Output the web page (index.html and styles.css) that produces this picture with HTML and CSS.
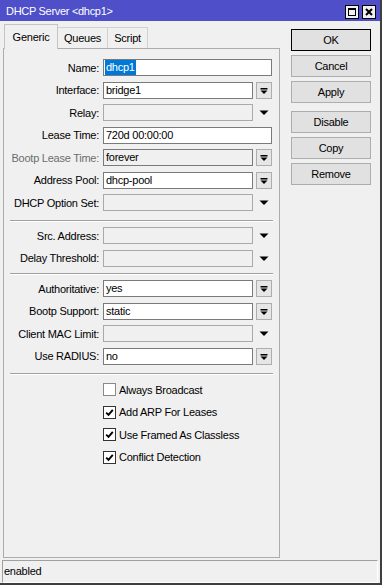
FILE: index.html
```html
<!DOCTYPE html>
<html lang="en">
<head>
    <meta charset="UTF-8">
    <meta name="viewport" content="width=device-width, initial-scale=1.0">
    <title>DHCP Server &lt;dhcp1&gt;</title>
    <link rel="stylesheet" href="styles.css">
</head>
<body>
    <div class="window">
        <div class="titlebar">
            <span class="title">DHCP Server &lt;dhcp1&gt;</span>
            <div class="title-buttons">
                <span class="tbtn">
                    <svg width="12" height="12" viewBox="0 0 12 12"><rect x="2.5" y="2.5" width="7" height="7" fill="none" stroke="#000"/><rect x="2" y="2" width="8" height="2" fill="#000"/></svg>
                </span>
                <span class="tbtn">
                    <svg width="12" height="12" viewBox="0 0 12 12"><path d="M3 3 L9 9 M9 3 L3 9" stroke="#000" stroke-width="2"/></svg>
                </span>
            </div>
        </div>

        <div class="main">
            <div class="left">
                <div class="tabs">
                    <div class="tab tab-generic active">Generic</div>
                    <div class="tab tab-queues">Queues</div>
                    <div class="tab tab-script">Script</div>
                </div>

                <div class="panel">
                    <div class="group">
                        <div class="row">
                            <label>Name:</label>
                            <div class="field wide"><span class="sel">dhcp1</span></div>
                        </div>
                        <div class="row">
                            <label>Interface:</label>
                            <div class="field">bridge1</div>
                            <span class="combo"><svg width="14" height="15" viewBox="0 0 14 15"><rect x="3.5" y="5" width="7" height="1.5" fill="#000"/><polygon points="3.5,7.5 10.5,7.5 7,11" fill="#000"/></svg></span>
                        </div>
                        <div class="row">
                            <label>Relay:</label>
                            <div class="field off"></div>
                            <span class="arrow"><svg width="16" height="17" viewBox="0 0 16 17"><polygon points="3.5,6.5 12.5,6.5 8,11" fill="#000"/></svg></span>
                        </div>
                        <div class="row">
                            <label>Lease Time:</label>
                            <div class="field wide">720d 00:00:00</div>
                        </div>
                        <div class="row">
                            <label class="dim">Bootp Lease Time:</label>
                            <div class="field grey">forever</div>
                            <span class="combo"><svg width="14" height="15" viewBox="0 0 14 15"><rect x="3.5" y="5" width="7" height="1.5" fill="#000"/><polygon points="3.5,7.5 10.5,7.5 7,11" fill="#000"/></svg></span>
                        </div>
                        <div class="row">
                            <label>Address Pool:</label>
                            <div class="field">dhcp-pool</div>
                            <span class="combo"><svg width="14" height="15" viewBox="0 0 14 15"><rect x="3.5" y="5" width="7" height="1.5" fill="#000"/><polygon points="3.5,7.5 10.5,7.5 7,11" fill="#000"/></svg></span>
                        </div>
                        <div class="row">
                            <label>DHCP Option Set:</label>
                            <div class="field off"></div>
                            <span class="arrow"><svg width="16" height="17" viewBox="0 0 16 17"><polygon points="3.5,6.5 12.5,6.5 8,11" fill="#000"/></svg></span>
                        </div>
                    </div>

                    <div class="sep sep-1"></div>

                    <div class="group">
                        <div class="row">
                            <label>Src. Address:</label>
                            <div class="field off"></div>
                            <span class="arrow"><svg width="16" height="17" viewBox="0 0 16 17"><polygon points="3.5,6.5 12.5,6.5 8,11" fill="#000"/></svg></span>
                        </div>
                        <div class="row">
                            <label>Delay Threshold:</label>
                            <div class="field off"></div>
                            <span class="arrow"><svg width="16" height="17" viewBox="0 0 16 17"><polygon points="3.5,6.5 12.5,6.5 8,11" fill="#000"/></svg></span>
                        </div>
                    </div>

                    <div class="sep sep-2"></div>

                    <div class="group">
                        <div class="row">
                            <label>Authoritative:</label>
                            <div class="field">yes</div>
                            <span class="combo"><svg width="14" height="15" viewBox="0 0 14 15"><rect x="3.5" y="5" width="7" height="1.5" fill="#000"/><polygon points="3.5,7.5 10.5,7.5 7,11" fill="#000"/></svg></span>
                        </div>
                        <div class="row">
                            <label>Bootp Support:</label>
                            <div class="field">static</div>
                            <span class="combo"><svg width="14" height="15" viewBox="0 0 14 15"><rect x="3.5" y="5" width="7" height="1.5" fill="#000"/><polygon points="3.5,7.5 10.5,7.5 7,11" fill="#000"/></svg></span>
                        </div>
                        <div class="row">
                            <label>Client MAC Limit:</label>
                            <div class="field off"></div>
                            <span class="arrow"><svg width="16" height="17" viewBox="0 0 16 17"><polygon points="3.5,6.5 12.5,6.5 8,11" fill="#000"/></svg></span>
                        </div>
                        <div class="row">
                            <label>Use RADIUS:</label>
                            <div class="field">no</div>
                            <span class="combo"><svg width="14" height="15" viewBox="0 0 14 15"><rect x="3.5" y="5" width="7" height="1.5" fill="#000"/><polygon points="3.5,7.5 10.5,7.5 7,11" fill="#000"/></svg></span>
                        </div>
                    </div>

                    <div class="sep sep-3"></div>

                    <div class="checks">
                        <div class="check"><span class="box empty"></span>Always Broadcast</div>
                        <div class="check"><span class="box"><svg width="11" height="11" viewBox="0 0 11 11"><path d="M2.2 5.6 L4.5 7.9 L8.8 2.8" fill="none" stroke="#000" stroke-width="1.9"/></svg></span>Add ARP For Leases</div>
                        <div class="check"><span class="box"><svg width="11" height="11" viewBox="0 0 11 11"><path d="M2.2 5.6 L4.5 7.9 L8.8 2.8" fill="none" stroke="#000" stroke-width="1.9"/></svg></span>Use Framed As Classless</div>
                        <div class="check"><span class="box"><svg width="11" height="11" viewBox="0 0 11 11"><path d="M2.2 5.6 L4.5 7.9 L8.8 2.8" fill="none" stroke="#000" stroke-width="1.9"/></svg></span>Conflict Detection</div>
                    </div>
                </div>
            </div>

            <div class="buttons">
                <div class="btn default">OK</div>
                <div class="btn">Cancel</div>
                <div class="btn">Apply</div>
                <div class="btn spaced">Disable</div>
                <div class="btn">Copy</div>
                <div class="btn">Remove</div>
            </div>
        </div>

        <div class="status">enabled</div>
    </div>
</body>
</html>
```

FILE: styles.css
```css
body {
    margin: 0;
    background-color: #fff;
    font-family: "Liberation Sans", Arial, sans-serif;
    font-size: 11px;
    letter-spacing: -0.25px;
    color: #000;
}
.window {
    width: 380px;
    height: 583px;
    border-right: 2px solid #3f3f3f;
    border-bottom: 2px solid #3f3f3f;
    background-color: #f0f0f0;
    display: flex;
    flex-direction: column;
}
.titlebar {
    height: 21px;
    flex-shrink: 0;
    background-color: #4f4fc9;
    color: #fff;
    display: flex;
    align-items: center;
    justify-content: space-between;
    padding: 0 4px 0 6px;
}
.title {
    letter-spacing: -0.3px;
}
.title-buttons {
    display: flex;
    gap: 3px;
    margin-top: 2px;
}
.tbtn {
    width: 12px;
    height: 12px;
    border: 1px solid #000;
    background-color: #f0f0f0;
    display: flex;
}
.main {
    flex: 1;
    display: flex;
    padding: 3px 0 2px 3px;
}
.left {
    width: 277px;
    display: flex;
    flex-direction: column;
}
.tabs {
    display: flex;
    align-items: flex-end;
    height: 24px;
    flex-shrink: 0;
    padding-left: 1px;
}
.tab {
    box-sizing: border-box;
    height: 21px;
    line-height: 21px;
    border: 1px solid #d2d2d2;
    border-bottom: none;
    margin-left: -1px;
    text-align: center;
    background-color: #f0f0f0;
}
.tab:first-child {
    margin-left: 0;
}
.tab-generic { width: 54px; }
.tab-queues { width: 51px; }
.tab-script { width: 41px; }
.tab.active {
    height: 25px;
    line-height: 24px;
    margin-bottom: -1px;
    border-color: #c4c4c4;
    position: relative;
}
.panel {
    flex: 1;
    border: 1px solid #acacac;
    padding-top: 10px;
}
.group {
    display: flex;
    flex-direction: column;
    gap: 5.5px;
}
.row {
    display: flex;
    align-items: center;
    height: 17px;
}
label {
    width: 95px;
    margin-right: 4px;
    text-align: right;
    white-space: nowrap;
}
label.dim {
    color: #6d6d6d;
}
.field {
    box-sizing: border-box;
    width: 150px;
    height: 17px;
    border: 1px solid #7a7a7a;
    background-color: #fff;
    padding-left: 2px;
    line-height: 15px;
    white-space: nowrap;
    overflow: hidden;
}
.field.wide {
    width: 169px;
}
.field.off {
    background-color: #f0f0f0;
    border-color: #a9a9a9;
}
.field.grey {
    background-color: #f0f0f0;
}
.sel {
    display: inline-block;
    margin-left: -1px;
    padding: 0 1px;
    background-color: #0078d7;
    color: #fff;
}
.combo {
    box-sizing: border-box;
    width: 16px;
    height: 17px;
    margin-left: 3px;
    border: 1px solid #adadad;
    background-color: #e6e6e6;
    display: flex;
}
.arrow {
    width: 16px;
    height: 17px;
    margin-left: 3px;
    display: flex;
}
.sep {
    border-top: 1px solid #a0a0a0;
    border-bottom: 1px solid #fff;
    margin-left: 6px;
    margin-right: 6px;
}
.sep-1 { margin-top: 9px; margin-bottom: 5px; }
.sep-2 { margin-top: 6.5px; margin-bottom: 5px; }
.sep-3 { margin-top: 8.5px; margin-bottom: 8px; }
.checks {
    display: flex;
    flex-direction: column;
    gap: 9.67px;
    padding-left: 99px;
}
.check {
    display: flex;
    align-items: center;
    height: 13px;
    gap: 3px;
    white-space: nowrap;
}
.box {
    width: 11px;
    height: 11px;
    border: 1px solid #333;
    background-color: #fff;
    display: flex;
}
.box.empty {
    border-color: #8a8a8a;
}
.buttons {
    width: 80px;
    margin-left: 11px;
    padding-top: 5px;
    display: flex;
    flex-direction: column;
    gap: 4px;
}
.btn {
    box-sizing: border-box;
    height: 22px;
    line-height: 20px;
    border: 1px solid #adadad;
    background-color: #e1e1e1;
    text-align: center;
}
.btn.default {
    border-color: #000;
}
.btn.spaced {
    margin-top: 4px;
}
.status {
    box-sizing: border-box;
    height: 23px;
    flex-shrink: 0;
    margin: 0 2px;
    border-top: 1px solid #a0a0a0;
    border-left: 1px solid #a0a0a0;
    border-right: 1px solid #fff;
    border-bottom: 1px solid #fff;
    padding-left: 1px;
    line-height: 21px;
}
```
